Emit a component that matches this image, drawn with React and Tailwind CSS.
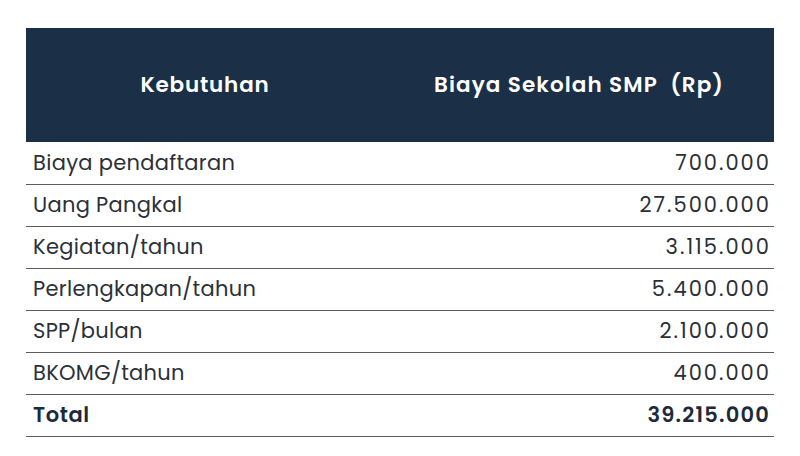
const rows = [
  ['Biaya pendaftaran', '700.000'],
  ['Uang Pangkal', '27.500.000'],
  ['Kegiatan/tahun', '3.115.000'],
  ['Perlengkapan/tahun', '5.400.000'],
  ['SPP/bulan', '2.100.000'],
  ['BKOMG/tahun', '400.000'],
];

export default function App() {
  return (
    <div className="w-[800px] h-[456px] bg-white pt-[28px] pl-[26px] font-['Poppins','Lato','Noto_Sans',sans-serif]">
      <table className="w-[748px] border-collapse">
        <thead>
          <tr className="bg-[#1b2f46] h-[114px]">
            <th className="w-[358px] text-center text-white font-semibold text-[21.5px] tracking-[0.8px]">
              Kebutuhan
            </th>
            <th className="text-center text-white font-semibold text-[21.5px] tracking-[1.1px] whitespace-pre">
              Biaya Sekolah SMP  (Rp)
            </th>
          </tr>
        </thead>
        <tbody>
          {rows.map(([label, value]) => (
            <tr key={label} className="h-[42px] border-b border-[#5c5c5c]">
              <td className="pl-[7px] text-[21px] tracking-[0.3px] text-[#2b3038]">{label}</td>
              <td className="pr-[3px] text-right text-[21px] tracking-[2px] text-[#2b3038]">{value}</td>
            </tr>
          ))}
          <tr className="h-[42px] border-b border-[#5c5c5c]">
            <td className="pl-[7px] text-[21px] font-semibold tracking-[0.6px] text-[#1c2a3a]">Total</td>
            <td className="pr-[4px] text-right text-[21px] font-semibold tracking-[1.2px] text-[#1c2a3a]">39.215.000</td>
          </tr>
        </tbody>
      </table>
    </div>
  );
}
